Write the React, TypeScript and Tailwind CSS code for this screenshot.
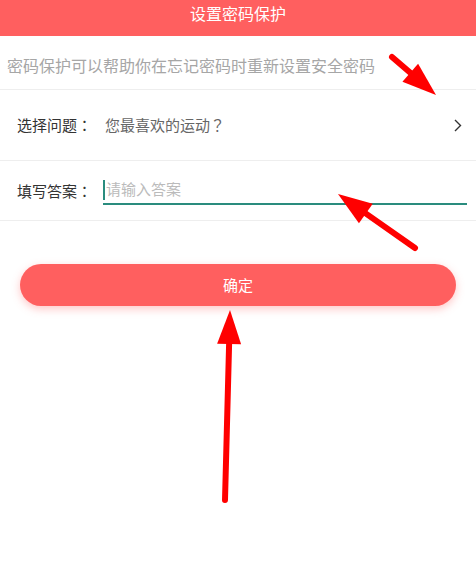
import React from 'react';

const font = { fontFamily: '"Noto Sans CJK SC", "Noto Sans", sans-serif' };
// centered full-width punctuation
const punct = { fontFamily: '"Noto Sans CJK JP", "Noto Sans CJK SC", sans-serif' };

// red callout arrow: shaft from (x1,y1) to the tip at (x2,y2)
function Arrow({ x1, y1, x2, y2 }: { x1: number; y1: number; x2: number; y2: number }) {
  const dx = x2 - x1;
  const dy = y2 - y1;
  const len = Math.hypot(dx, dy);
  const ux = dx / len;
  const uy = dy / len;
  const headLen = 34;
  const half = 12;
  const bx = x2 - ux * headLen;
  const by = y2 - uy * headLen;
  const pts = [
    `${x2},${y2}`,
    `${bx - uy * half},${by + ux * half}`,
    `${bx + uy * half},${by - ux * half}`,
  ].join(' ');
  return (
    <g>
      <line x1={x1} y1={y1} x2={bx + ux * 2} y2={by + uy * 2} stroke="#ff0000" strokeWidth={6} strokeLinecap="round" />
      <polygon points={pts} fill="#ff0000" />
    </g>
  );
}

export default function App() {
  return (
    <div className="relative h-[575px] w-[476px] overflow-hidden bg-white" style={font}>
      {/* Title bar */}
      <header className="flex h-9 items-start justify-center bg-[#ff5f5f] pt-[2px]">
        <span className="text-[16px] leading-[22px] text-white">设置密码保护</span>
      </header>

      {/* Hint */}
      <div className="flex h-[54px] items-center border-b border-[#eeeeee] pl-[7px] pt-[4px]">
        <span className="text-[16px] text-[#a6a6a6]">密码保护可以帮助你在忘记密码时重新设置安全密码</span>
      </div>

      {/* Question picker */}
      <div className="flex h-[71px] items-center border-b border-[#eeeeee] pl-[17px] pr-[14px]">
        <span className="w-[88px] text-[15px] text-[#333333]">
          选择问题<span style={punct}>：</span>
        </span>
        <span className="flex-1 text-[15px] text-[#666666]">
          您最喜欢的运动<span style={punct}>？</span>
        </span>
        <svg width="8" height="13" viewBox="0 0 8 13" className="shrink-0">
          <path d="M1 1l5.5 5.5L1 12" fill="none" stroke="#333333" strokeWidth="1.4" />
        </svg>
      </div>

      {/* Answer input */}
      <div className="flex h-[60px] items-center border-b border-[#eeeeee] pl-[17px] pr-[9px] pt-[2px]">
        <span className="w-[86px] text-[15px] text-[#333333]">
          填写答案<span style={punct}>：</span>
        </span>
        <div className="flex h-[26px] flex-1 items-center border-b-2 border-[#2a8c7e] pb-[2px]">
          <span className="mr-[1px] h-[20px] w-[2px] bg-[#2a8c7e]" />
          <span className="text-[15px] text-[#bbbbbb]">请输入答案</span>
        </div>
      </div>

      {/* Confirm */}
      <div className="px-5 pt-[43px]">
        <button className="flex h-[42px] w-full items-center justify-center rounded-full bg-[#ff5f5f] text-[15px] text-white shadow-[0_3px_8px_rgba(255,95,95,0.35)]">
          确定
        </button>
      </div>

      {/* Callout arrows */}
      <svg className="pointer-events-none absolute inset-0" width="476" height="575">
        <Arrow x1={392} y1={57} x2={436} y2={95} />
        <Arrow x1={415} y1={248} x2={338} y2={194} />
        <Arrow x1={225} y1={500} x2={230} y2={310} />
      </svg>
    </div>
  );
}
